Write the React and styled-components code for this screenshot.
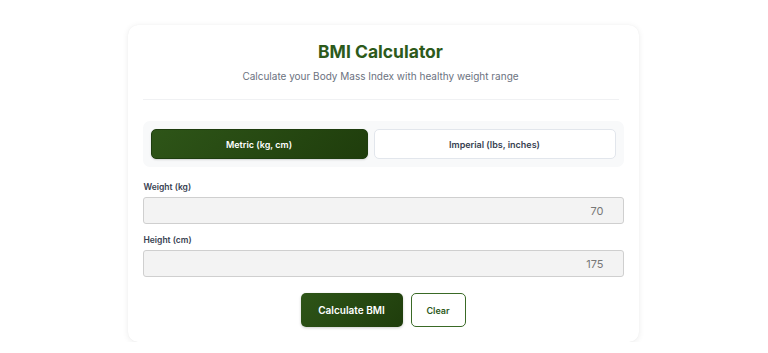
import React, { useState } from "react";
import styled, { createGlobalStyle } from "styled-components";

const Global = createGlobalStyle`
  * { box-sizing: border-box; }
  body { margin: 0; background: #ffffff; font-family: Inter, "Noto Sans", "Liberation Sans", sans-serif; }
`;

const Page = styled.div`
  display: flex;
  justify-content: center;
  padding-top: 25px;
  padding-right: 2px;
`;

const Card = styled.div`
  width: 511px;
  background: #fff;
  border-radius: 10px;
  box-shadow: 0 1px 6px rgba(0, 0, 0, 0.08), 0 0 1px rgba(0, 0, 0, 0.06);
  padding: 15px 15px 15px 15px;
  display: flex;
  flex-direction: column;
`;

const Header = styled.div`
  text-align: center;
  padding-bottom: 16px;
  border-bottom: 1px solid #f0f1f3;
  margin: 0 5px 21px 0;
`;

const Title = styled.h1`
  margin: 1px 0 0;
  font-size: 17.5px;
  line-height: 22px;
  font-weight: 700;
  color: #2d5a1b;
`;

const Subtitle = styled.p`
  margin: 6px 0 0;
  font-size: 10px;
  line-height: 14px;
  color: #6b7280;
`;

const Toggle = styled.div`
  display: flex;
  gap: 6px;
  padding: 8px;
  background: #f8f9fa;
  border-radius: 7px;
  margin-bottom: 14px;
`;

const ToggleButton = styled.button`
  flex: ${(p) => (p.$active ? "0 0 217px" : "1")};
  height: 30px;
  border-radius: 5px;
  font-family: inherit;
  font-size: 9px;
  font-weight: 600;
  cursor: pointer;
  border: 1px solid ${(p) => (p.$active ? "#1e3d0f" : "#e2e6ec")};
  background: ${(p) =>
    p.$active ? "linear-gradient(135deg, #2e5518 0%, #1f3d0c 100%)" : "#ffffff"};
  color: ${(p) => (p.$active ? "#ffffff" : "#374151")};
  box-shadow: ${(p) => (p.$active ? "0 1px 2px rgba(0,0,0,0.15)" : "none")};
`;

const Field = styled.div`
  display: flex;
  flex-direction: column;
  margin-bottom: 10px;
`;

const Label = styled.label`
  font-size: 8.5px;
  font-weight: 600;
  color: #374151;
  line-height: 12px;
  margin-bottom: 4px;
  margin-left: 1px;
`;

const Input = styled.input`
  height: 27px;
  width: 481px;
  border: 1px solid #cfcfcf;
  border-radius: 3px;
  background: #f3f3f3;
  text-align: right;
  padding: 0 19px 0 10px;
  font-family: inherit;
  font-size: 11px;
  color: #777;
  outline: none;
`;

const Actions = styled.div`
  display: flex;
  justify-content: center;
  gap: 8px;
  margin-top: 6px;
`;

const Primary = styled.button`
  height: 34px;
  width: 102px;
  border: none;
  border-radius: 5px;
  background: linear-gradient(135deg, #2e5518 0%, #1f3d0c 100%);
  color: #fff;
  font-family: inherit;
  font-size: 10px;
  font-weight: 600;
  box-shadow: 0 1px 3px rgba(0, 0, 0, 0.2);
  cursor: pointer;
`;

const Secondary = styled.button`
  height: 34px;
  width: 55px;
  border: 1.5px solid #3a6a26;
  border-radius: 5px;
  background: #fff;
  color: #2d5a1b;
  font-family: inherit;
  font-size: 9px;
  font-weight: 600;
  cursor: pointer;
`;

export default function App() {
  const [unit, setUnit] = useState("metric");
  const [weight, setWeight] = useState("70");
  const [height, setHeight] = useState("175");
  return (
    <>
      <Global />
      <Page>
        <Card>
          <Header>
            <Title>BMI Calculator</Title>
            <Subtitle>Calculate your Body Mass Index with healthy weight range</Subtitle>
          </Header>
          <Toggle>
            <ToggleButton $active={unit === "metric"} onClick={() => setUnit("metric")}>
              Metric (kg, cm)
            </ToggleButton>
            <ToggleButton $active={unit === "imperial"} onClick={() => setUnit("imperial")}>
              Imperial (lbs, inches)
            </ToggleButton>
          </Toggle>
          <Field>
            <Label>Weight (kg)</Label>
            <Input value={weight} onChange={(e) => setWeight(e.target.value)} />
          </Field>
          <Field>
            <Label>Height (cm)</Label>
            <Input value={height} onChange={(e) => setHeight(e.target.value)} />
          </Field>
          <Actions>
            <Primary>Calculate BMI</Primary>
            <Secondary onClick={() => { setWeight(""); setHeight(""); }}>Clear</Secondary>
          </Actions>
        </Card>
      </Page>
    </>
  );
}
